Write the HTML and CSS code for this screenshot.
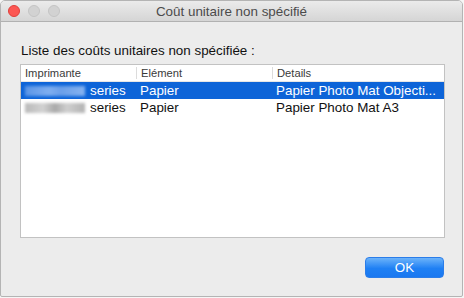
FILE: index.html
```html
<!DOCTYPE html>
<html lang="fr">
<head>
    <meta charset="UTF-8">
    <meta name="viewport" content="width=device-width, initial-scale=1.0">
    <title>Coût unitaire non spécifié</title>
    <link rel="stylesheet" href="styles.css">
</head>
<body>

<div class="window">
    <div class="titlebar">
        <div class="lights">
            <span class="light close"></span>
            <span class="light"></span>
            <span class="light"></span>
        </div>
        <div class="title">Coût unitaire non spécifié</div>
    </div>

    <div class="content">
        <p class="label">Liste des coûts unitaires non spécifiée :</p>

        <div class="table">
            <div class="row head">
                <div class="cell">Imprimante</div>
                <div class="cell">Elément</div>
                <div class="cell">Details</div>
            </div>
            <div class="row selected">
                <div class="cell"><span class="blur"></span>series</div>
                <div class="cell">Papier</div>
                <div class="cell">Papier Photo Mat Objecti...</div>
            </div>
            <div class="row">
                <div class="cell"><span class="blur"></span>series</div>
                <div class="cell">Papier</div>
                <div class="cell">Papier Photo Mat A3</div>
            </div>
        </div>

        <div class="actions">
            <button class="button">OK</button>
        </div>
    </div>
</div>

</body>
</html>
```

FILE: styles.css
```css
body {
    margin: 0;
    font-family: 'Liberation Sans', Arial, sans-serif;
    background: #f6f6f6;
}

.window {
    box-sizing: border-box;
    width: 463px;
    height: 297px;
    border: 1px solid #b4b4b4;
    border-radius: 5px 5px 2px 2px;
    background: #ececec;
    overflow: hidden;
}

.titlebar {
    position: relative;
    height: 20px;
    background: linear-gradient(#ebebeb, #d5d5d5);
    border-bottom: 1px solid #b1b1b1;
}

.lights {
    display: flex;
    gap: 8px;
    padding: 4px 0 0 7px;
}

.light {
    box-sizing: border-box;
    width: 12px;
    height: 12px;
    border-radius: 50%;
    background: #d2d2d2;
    border: 1px solid #c4c4c4;
}

.light.close {
    background: #fc5753;
    border-color: #df3f3b;
}

.title {
    position: absolute;
    top: 0;
    left: 0;
    right: 0;
    line-height: 22px;
    text-align: center;
    font-size: 13.4px;
    color: #4b4b4b;
}

.content {
    padding: 20px 17px 0 19px;
}

.label {
    margin: 0 0 5px 1px;
    font-size: 13.4px;
    line-height: 17px;
    color: #111;
}

.table {
    height: 174px;
    box-sizing: border-box;
    background: #fff;
    border: 1px solid #c2c2c2;
}

.row {
    display: grid;
    grid-template-columns: 115px 136px 1fr;
    height: 17px;
    font-size: 13.4px;
    line-height: 17px;
    color: #111;
}

.row .cell {
    padding-left: 4px;
    white-space: nowrap;
    overflow: hidden;
}

.row.head {
    font-size: 11.2px;
    color: #3a3a3a;
    border-bottom: 1px solid #e6e6e6;
    height: 16px;
    line-height: 16px;
}

.row.head .cell + .cell {
    border-left: 1px solid #dcdcdc;
    margin: 2px 0;
    line-height: 12px;
}

.row.selected {
    background: #0d64d8;
    color: #fff;
}

.blur {
    display: inline-block;
    width: 60px;
    height: 10px;
    margin-right: 5px;
    vertical-align: -1px;
    background: linear-gradient(90deg, #b9b9b9, #d2d2d2 30%, #a9a9a9 50%, #cfcfcf 70%, #b2b2b2);
    filter: blur(1.5px);
}

.selected .blur {
    background: linear-gradient(90deg, #5b95e6, #7eaef0 40%, #6a9fe9 60%, #86b3f0);
}

.actions {
    display: flex;
    justify-content: flex-end;
    padding: 19px 1px 0 0;
}

.button {
    width: 79px;
    height: 21px;
    padding: 0;
    font-family: 'Liberation Sans', Arial, sans-serif;
    font-size: 13.4px;
    color: #fff;
    border: 1px solid #2b7de9;
    border-radius: 4px;
    background: linear-gradient(#6cb3fa, #1f80f4 55%, #1a78f0);
}
```
